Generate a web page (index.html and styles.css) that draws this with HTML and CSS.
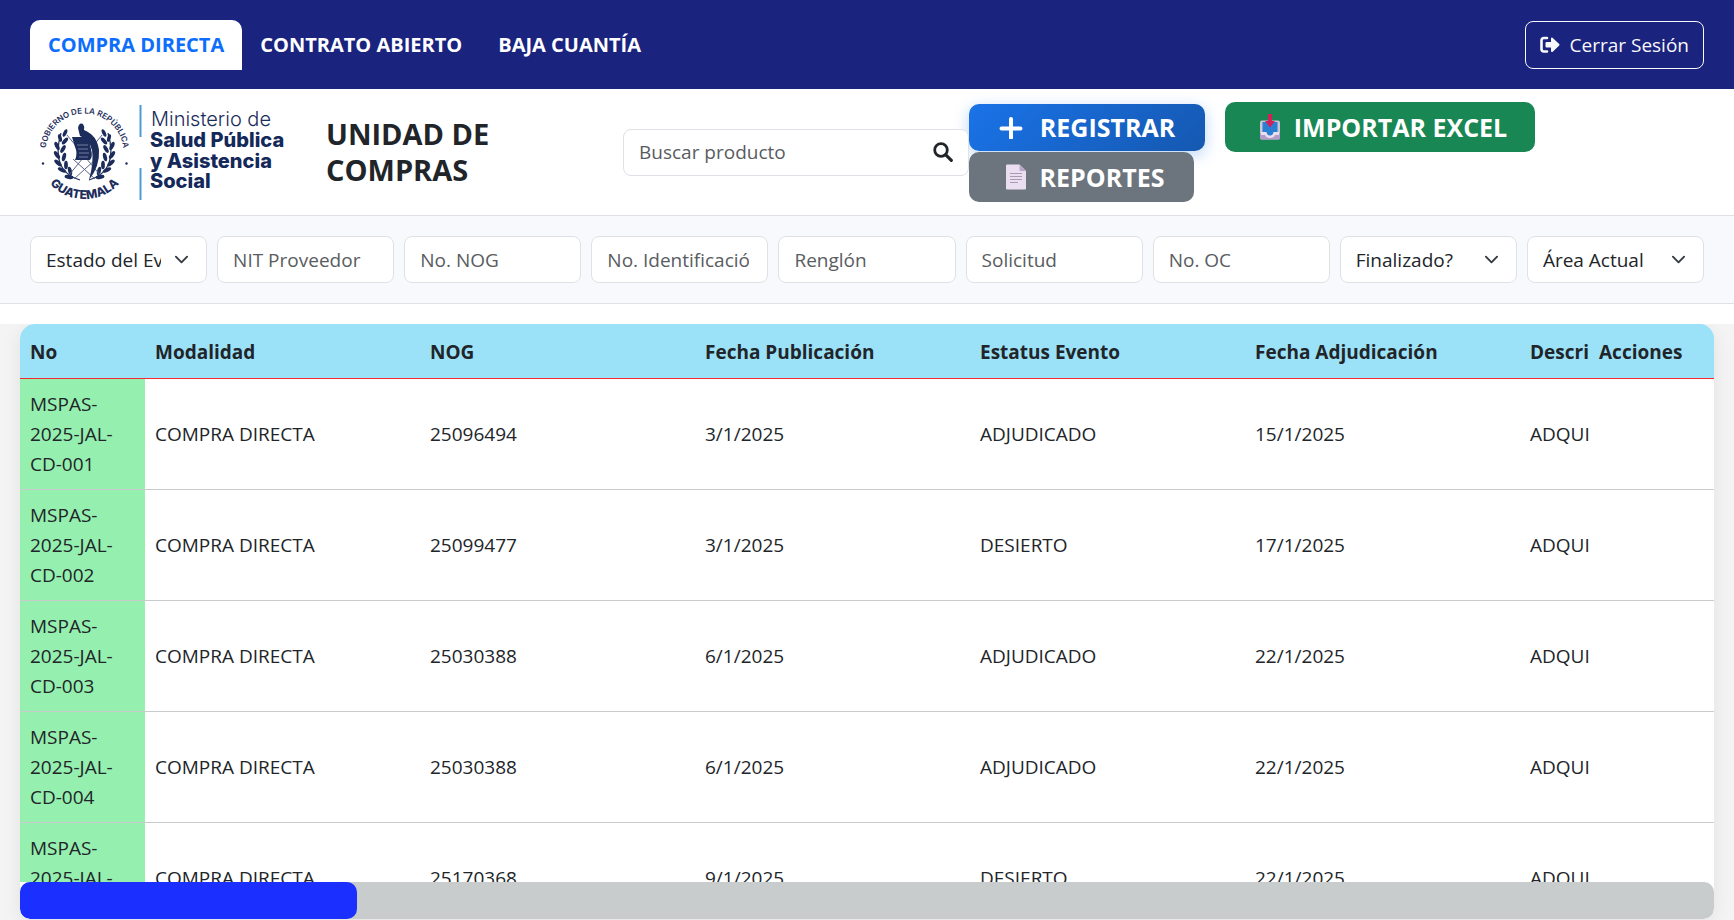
FILE: index.html
```html
<!DOCTYPE html>
<html lang="es">
<head>
<meta charset="utf-8">
<title>Unidad de Compras</title>
<link rel="stylesheet" href="styles.css">
</head>
<body>
<header class="topbar">
  <nav class="tabs">
    <a class="tab tab-active" href="#directa">COMPRA DIRECTA</a>
    <a class="tab" href="#abierto">CONTRATO ABIERTO</a>
    <a class="tab" href="#baja">BAJA CUANTÍA</a>
  </nav>
  <button class="logout" type="button">
    <svg width="20" height="18" viewBox="0 0 20 18" aria-hidden="true"><path d="M7 2H4Q1.500 2 1.500 4.500V13Q1.500 15.500 4 15.500H7" fill="none" stroke="currentColor" stroke-width="2.600" stroke-linecap="round"/><path d="M6.500 6H11V2.200Q11.300 1 12.500 1.700L19.200 8Q19.900 8.800 19.200 9.600L12.500 15.900Q11.300 16.500 11 15.300V11.600H6.500Q5.500 11.600 5.500 10.500V7Q5.500 6 6.500 6Z" fill="currentColor"/></svg>
    Cerrar Sesión
  </button>
</header>

<section class="masthead">
  <svg class="logo" width="260" height="106" viewBox="34 100 260 106" role="img" aria-label="Ministerio de Salud Pública y Asistencia Social">
    <defs>
      <path id="arcTop" d="M45.660 157A39 39 0 1 1 123.340 157"/>
      <path id="arcBottom" d="M37.500 153A47 47 0 0 0 131.500 153"/>
      <g id="laurel" fill="#1c2c5b">
        <path d="M80 181Q50 172 61 134" fill="none" stroke="#1c2c5b" stroke-width="1.200"/>
        <ellipse cx="65" cy="134" rx="1.800" ry="4" transform="rotate(25 65 134)"/>
        <ellipse cx="60" cy="139" rx="1.800" ry="4" transform="rotate(-15 60 139)"/>
        <ellipse cx="65" cy="142" rx="1.900" ry="4.300" transform="rotate(40 65 142)"/>
        <ellipse cx="57" cy="147" rx="2" ry="4.500" transform="rotate(-25 57 147)"/>
        <ellipse cx="63" cy="150" rx="1.900" ry="4.300" transform="rotate(30 63 150)"/>
        <ellipse cx="57" cy="156" rx="2" ry="4.500" transform="rotate(-35 57 156)"/>
        <ellipse cx="64" cy="158" rx="1.900" ry="4.300" transform="rotate(15 64 158)"/>
        <ellipse cx="58" cy="164" rx="2" ry="4.500" transform="rotate(-50 58 164)"/>
        <ellipse cx="66" cy="166" rx="1.900" ry="4.300" transform="rotate(0 66 166)"/>
        <ellipse cx="62" cy="171" rx="2" ry="4.500" transform="rotate(-65 62 171)"/>
        <ellipse cx="70" cy="172" rx="1.900" ry="4.300" transform="rotate(-15 70 172)"/>
        <ellipse cx="69" cy="178" rx="2" ry="4.500" transform="rotate(-80 69 178)"/>
      </g>
    </defs>
    <text class="seal-top"><textPath href="#arcTop" startOffset="50%" text-anchor="middle">GOBIERNO DE LA REPÚBLICA</textPath></text>
    <text class="seal-bottom"><textPath href="#arcBottom" startOffset="50%" text-anchor="middle">GUATEMALA</textPath></text>
    <circle cx="43" cy="164.500" r="1.200" fill="#1c2c5b"/>
    <circle cx="126.500" cy="164.500" r="1.200" fill="#1c2c5b"/>
    <use href="#laurel"/>
    <use href="#laurel" transform="translate(169 0) scale(-1 1)"/>
    <path d="M67 136L100 176M102 136L69 176M74 180L96 160M95 180L73 160" stroke="#5b678c" stroke-width="1" fill="none"/>
    <path d="M72 138H92Q88 142 91 150Q93 158 90 161H75Q78 154 75 148Z" fill="#1c2c5b"/>
    <path d="M77 146H88M78 150H88M79 154H89M79 158H88" stroke="#8c95b2" stroke-width=".8"/>
    <path d="M78 129Q79 123 83 125Q85 128 84 131Q97 136 99 151Q100 167 89 181Q94 163 92 151Q89 140 80 137Z" fill="#1c2c5b"/>
    <path d="M140.500 106V138M140.500 169V201" stroke="#4a9dd4" stroke-width="2"/>
    <text class="ministry-light" x="151" y="127">Ministerio de</text>
    <text class="ministry-bold" x="150" y="148">Salud Pública</text>
    <text class="ministry-bold" x="150" y="169">y Asistencia</text>
    <text class="ministry-bold" x="150" y="189">Social</text>
  </svg>
  <h1 class="title">UNIDAD DE COMPRAS</h1>
  <form class="search">
    <input class="search-input" type="text" placeholder="Buscar producto" aria-label="Buscar producto">
    <button class="search-btn" type="button" aria-label="Buscar">
      <svg width="20" height="20" viewBox="0 0 20 20"><circle cx="8" cy="8" r="6.300" fill="none" stroke="#212529" stroke-width="2.800"/><path d="M12.800 12.800L18.300 18.300" stroke="#212529" stroke-width="3.200" stroke-linecap="round"/></svg>
    </button>
  </form>
  <div class="actions">
    <button class="action action-register" type="button">
      <svg width="24" height="24" viewBox="0 0 24 24" aria-hidden="true"><path d="M12 4V23M2.500 13.500H21.500" stroke="#fff" stroke-width="4" stroke-linecap="round"/></svg>
      REGISTRAR
    </button>
    <button class="action action-import" type="button">
      <svg width="22" height="26" viewBox="0 0 22 26" aria-hidden="true"><rect x="1" y="6.500" width="20" height="19" rx="2" fill="#cdc4d6"/><path d="M3.500 8H18.500V18L14 20Q14 22.500 11 22.500T8 20L3.500 18Z" fill="#2a7fd2"/><path d="M1 19H7Q8 23 11 23T15 19H21V24Q21 25.500 19.500 25.500H2.500Q1 25.500 1 24Z" fill="#b49bcb"/><path d="M2 18H7.500Q8 21.500 11 21.500T14.500 18H20V21H16Q15 24 11 24T6 21H2Z" fill="#e8e0ee"/><path d="M9 0H13V7H16L11 13.500L6 7H9Z" fill="#d3205a"/></svg>
      IMPORTAR EXCEL
    </button>
    <button class="action action-reports" type="button">
      <svg width="22" height="26" viewBox="0 0 22 26" aria-hidden="true"><path d="M2 .5H14.500L21 7V24.500Q21 25.500 20 25.500H2Q1 25.500 1 24.500V1.500Q1 .5 2 .5Z" fill="#e9dff0"/><path d="M14.500 .5L21 7H15.500Q14.500 7 14.500 6Z" fill="#b9a8c9"/><path d="M5 9.500H17M5 12.500H17M5 15.500H17M5 18.500H13" stroke="#a99bb5" stroke-width="1.200"/></svg>
      REPORTES
    </button>
  </div>
</section>

<form class="filters">
  <select class="field field-select" aria-label="Estado del Evento"><option>Estado del Evento</option></select>
  <input class="field" type="text" placeholder="NIT Proveedor" aria-label="NIT Proveedor">
  <input class="field" type="text" placeholder="No. NOG" aria-label="No. NOG">
  <input class="field" type="text" placeholder="No. Identificación" aria-label="No. Identificación">
  <input class="field" type="text" placeholder="Renglón" aria-label="Renglón">
  <input class="field" type="text" placeholder="Solicitud" aria-label="Solicitud">
  <input class="field" type="text" placeholder="No. OC" aria-label="No. OC">
  <select class="field field-select" aria-label="Finalizado?"><option>Finalizado?</option></select>
  <select class="field field-select" aria-label="Área Actual"><option>Área Actual</option></select>
</form>

<main class="content">
  <div class="panel">
    <div class="table-view">
      <table class="grid">
        <thead>
          <tr><th class="col-no">No</th><th>Modalidad</th><th>NOG</th><th>Fecha Publicación</th><th>Estatus Evento</th><th>Fecha Adjudicación</th><th>Descripción</th><th class="col-actions">Acciones</th></tr>
        </thead>
        <tbody>
          <tr><td class="col-no">MSPAS-2025-JAL-CD-001</td><td>COMPRA DIRECTA</td><td>25096494</td><td>3/1/2025</td><td>ADJUDICADO</td><td>15/1/2025</td><td>ADQUISICIÓN</td><td class="col-actions"></td></tr>
          <tr><td class="col-no">MSPAS-2025-JAL-CD-002</td><td>COMPRA DIRECTA</td><td>25099477</td><td>3/1/2025</td><td>DESIERTO</td><td>17/1/2025</td><td>ADQUISICIÓN</td><td class="col-actions"></td></tr>
          <tr><td class="col-no">MSPAS-2025-JAL-CD-003</td><td>COMPRA DIRECTA</td><td>25030388</td><td>6/1/2025</td><td>ADJUDICADO</td><td>22/1/2025</td><td>ADQUISICIÓN</td><td class="col-actions"></td></tr>
          <tr><td class="col-no">MSPAS-2025-JAL-CD-004</td><td>COMPRA DIRECTA</td><td>25030388</td><td>6/1/2025</td><td>ADJUDICADO</td><td>22/1/2025</td><td>ADQUISICIÓN</td><td class="col-actions"></td></tr>
          <tr><td class="col-no">MSPAS-2025-JAL-CD-005</td><td>COMPRA DIRECTA</td><td>25170368</td><td>9/1/2025</td><td>DESIERTO</td><td>22/1/2025</td><td>ADQUISICIÓN</td><td class="col-actions"></td></tr>
        </tbody>
      </table>
    </div>
    <div class="scroll-track"><div class="scroll-thumb"></div></div>
  </div>
</main>
</body>
</html>
```

FILE: styles.css
```css
* { box-sizing: border-box; }
body {
  margin: 0;
  height: 100vh;
  display: flex;
  flex-direction: column;
  overflow: hidden;
  background: #fff;
  color: #212529;
  font: 19px/30px "Segoe UI", "Open Sans", "Noto Sans", sans-serif;
}
button, input, select { font: inherit; color: inherit; }

.topbar {
  flex: none;
  display: flex;
  justify-content: space-between;
  align-items: center;
  padding: 20px 30px 19px;
  background: #1a237e;
}
.tabs { display: flex; }
.tab {
  padding: 10px 18px;
  border-radius: 10px 10px 0 0;
  color: #fff;
  font-size: 20px;
  font-weight: 700;
  text-decoration: none;
}
.tab-active { background: #fff; color: #0d6efd; }
.logout {
  display: flex;
  align-items: center;
  gap: 10px;
  height: 48px;
  padding: 0 14px;
  border: 1px solid #f8f9fa;
  border-radius: 8px;
  background: none;
  color: #f8f9fa;
}

.masthead {
  flex: none;
  display: flex;
  align-items: center;
  padding: 10px 30px;
  border-bottom: 1px solid #dee2e6;
}
.logo { flex: none; margin-left: 4px; }
.seal-top { font: 600 8px "Inter", sans-serif; fill: #1c2c5b; }
.seal-bottom { font: 800 12px "Inter", sans-serif; fill: #1c2c5b; }
.ministry-light { font: 300 20px "Inter", sans-serif; fill: #1c2c5b; }
.ministry-bold { font: 800 20px "Inter", sans-serif; fill: #14295a; }
.title {
  width: 297px;
  margin: 0 0 0 32px;
  padding-right: 90px;
  font-size: 29px;
  line-height: 36px;
  font-weight: 700;
}
.search { position: relative; width: 346px; }
.search-input {
  display: block;
  width: 100%;
  height: 47px;
  padding: 0 50px 0 15px;
  border: 1px solid #dee2e6;
  border-radius: 8px;
  background: #fff;
}
.search-btn {
  position: absolute;
  top: 0;
  right: 0;
  height: 47px;
  padding: 0 16px;
  border: 0;
  background: none;
  display: flex;
  align-items: center;
}
::placeholder { color: #595c5f; opacity: 1; }
.actions {
  flex: 1;
  display: flex;
  flex-wrap: wrap;
  align-items: center;
  column-gap: 20px;
}
.action {
  display: flex;
  align-items: center;
  justify-content: center;
  height: 50px;
  gap: 13px;
  padding: 0 0 0 6px;
  border: 0;
  border-radius: 10px;
  color: #fff;
  font-size: 25px;
  font-weight: 700;
}
.action-register {
  width: 236px;
  height: 47px;
  gap: 17px;
  padding: 0;
  background: linear-gradient(135deg, #1a73e8, #1558b0);
  box-shadow: 0 4px 15px rgba(26, 115, 232, .3);
}
.action-import { width: 310px; background: #198754; }
.action-reports { width: 225px; background: #6c757d; position: relative; }

.filters {
  flex: none;
  display: grid;
  grid-template-columns: repeat(9, minmax(0, 1fr));
  gap: 10px;
  padding: 20px 30px;
  background: #f8f9fc;
  border-bottom: 1px solid #dee2e6;
}
.field {
  width: 100%;
  height: 47px;
  padding: 0 18px 0 15px;
  border: 1px solid #dee2e6;
  border-radius: 8px;
  background: #fff;
}
.field-select {
  appearance: none;
  padding-right: 45px;
  background: #fff url("data:image/svg+xml,%3Csvg xmlns='http://www.w3.org/2000/svg' viewBox='0 0 16 16'%3E%3Cpath fill='none' stroke='%23343a40' stroke-linecap='round' stroke-linejoin='round' stroke-width='2' d='m2 5 6 6 6-6'/%3E%3C/svg%3E") no-repeat right 17px center / 15px 15px;
}

.content {
  flex: 1;
  min-height: 0;
  display: flex;
  margin-top: 20px;
  padding: 0 20px 1px;
  overflow: hidden;
  background: #f4f4f4;
}
.panel {
  flex: 1;
  min-width: 0;
  display: flex;
  flex-direction: column;
  overflow: hidden;
  border-radius: 15px 15px 10px 10px;
  background: #fff;
  box-shadow: 0 4px 20px rgba(0, 0, 0, .08);
}
.table-view { flex: 1; min-height: 0; overflow: hidden; }
.grid {
  width: 1900px;
  table-layout: fixed;
  border-collapse: separate;
  border-spacing: 0;
}
.grid th {
  height: 55px;
  padding: 2px 10px 0;
  background: #9be2f8;
  border-bottom: 1px solid #f52a30;
  text-align: left;
  font-weight: 700;
}
.grid td {
  padding: 10px;
  border-bottom: 1px solid #c8cacc;
}
.grid .col-no { width: 125px; }
.grid td.col-no { background: #95efaf; }
.grid .col-actions {
  width: 125px;
  position: sticky;
  right: 0;
}
.grid td.col-actions { background: #fff; }
.scroll-track {
  flex: none;
  height: 37px;
  border-radius: 10px;
  background: #c8cccd;
}
.scroll-thumb {
  width: 19.9%;
  height: 100%;
  border-radius: 10px;
  background: #1b30ff;
}
```
